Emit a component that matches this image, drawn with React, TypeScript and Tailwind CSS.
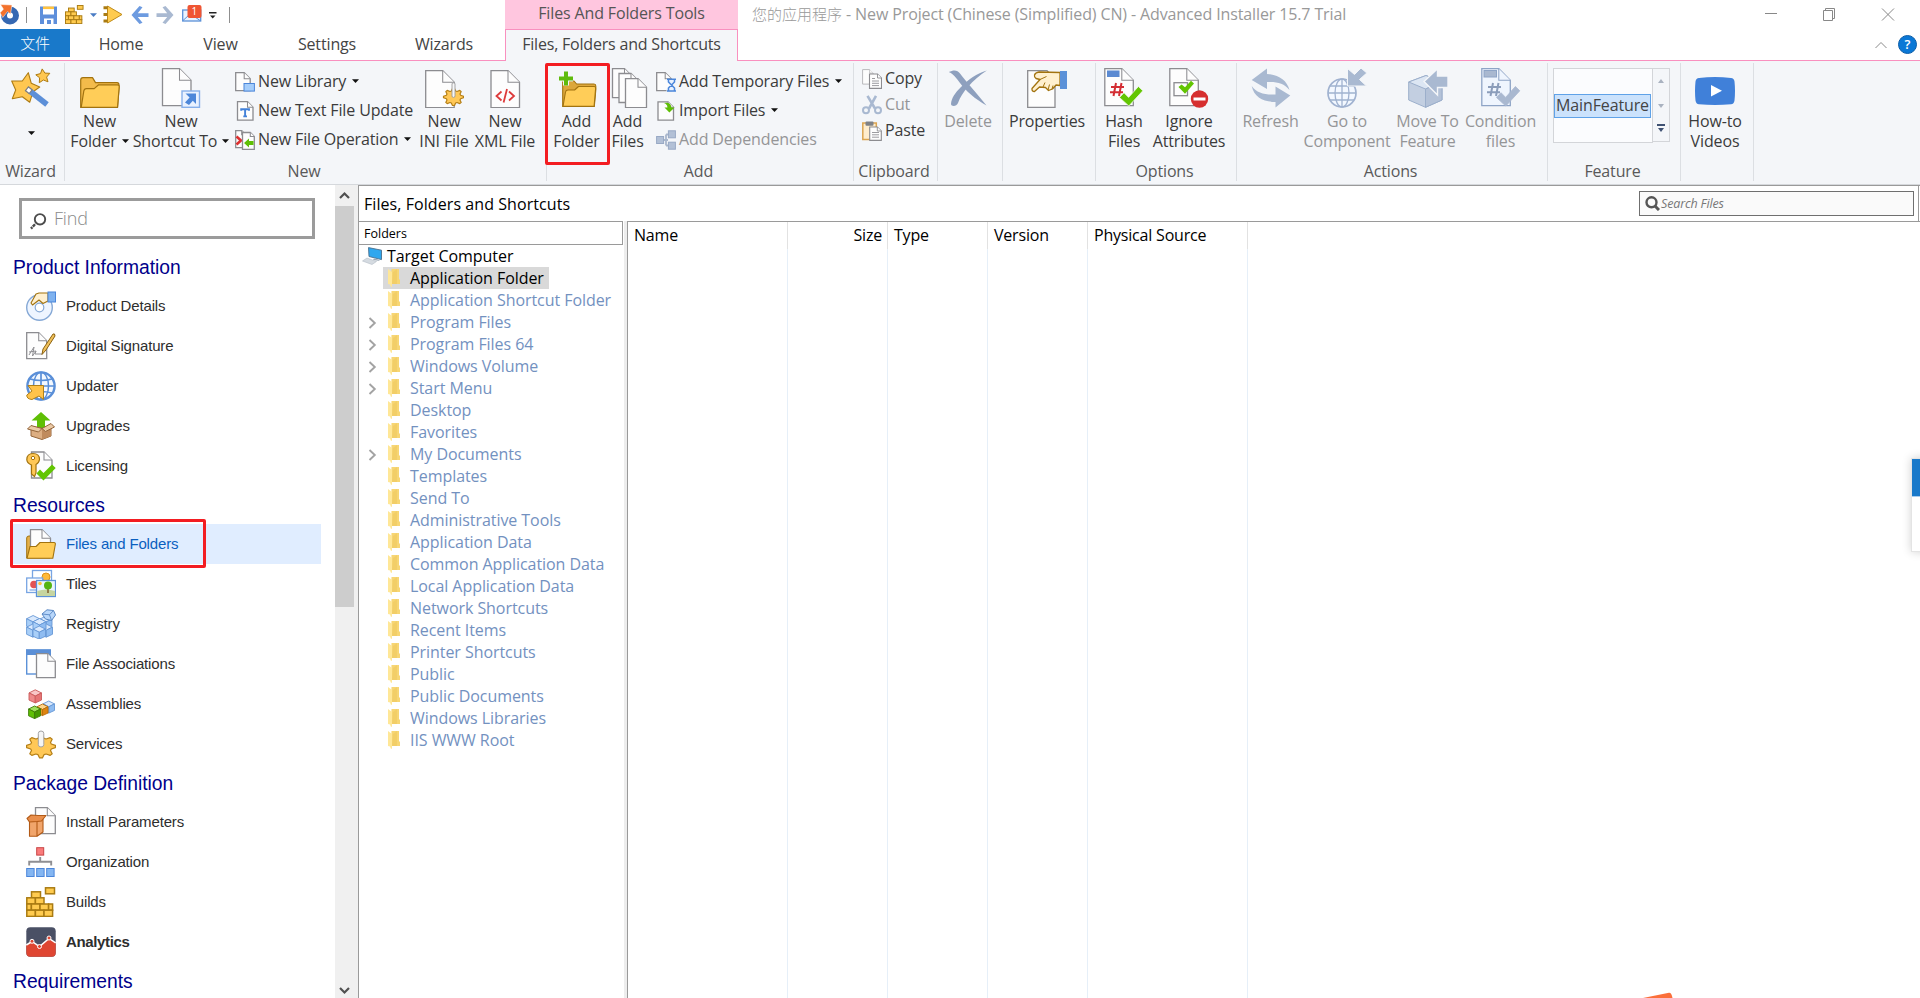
import type { ReactNode } from 'react';

/* ---------- drawing helpers ---------- */

function Svg({ w = 40, h = w, box, children }: { w?: number; h?: number; box?: string; children: ReactNode }) {
  return (
    <svg width={w} height={h} viewBox={box ?? `0 0 ${w} ${h}`} fill="none" className="shrink-0">
      {children}
    </svg>
  );
}

/* Sheet of paper with a folded corner */
function Page({ x, y, w, h, f, s = '#8c8c90', fill = '#fdfdfd', sw = 1.3 }: { x: number; y: number; w: number; h: number; f: number; s?: string; fill?: string; sw?: number }) {
  return (
    <g stroke={s} strokeWidth={sw} fill={fill}>
      <path d={`M${x} ${y}H${x + w - f}L${x + w} ${y + f}V${y + h}H${x}Z`} />
      <path d={`M${x + w - f} ${y}V${y + f}H${x + w}`} strokeWidth={sw * 0.8} />
    </g>
  );
}

function starPoints(cx: number, cy: number, r: number, turn: number) {
  return Array.from({ length: 10 }, (_, i) => {
    const a = ((turn + i * 36 - 90) * Math.PI) / 180;
    const q = i % 2 ? r * 0.5 : r;
    return `${(cx + q * Math.cos(a)).toFixed(1)},${(cy + q * Math.sin(a)).toFixed(1)}`;
  }).join(' ');
}

function Gear({ cx, cy, rx, ry }: { cx: number; cy: number; rx: number; ry: number }) {
  const pts = Array.from({ length: 32 }, (_, i) => {
    const a = ((i * 11.25 - 5.6) * Math.PI) / 180;
    const q = i % 4 < 2 ? 1 : 0.74;
    return `${(cx + q * rx * Math.cos(a)).toFixed(1)},${(cy + q * ry * Math.sin(a)).toFixed(1)}`;
  }).join(' ');
  return <polygon points={pts} fill="#ffc857" stroke="#b57f16" strokeWidth="1.2" strokeLinejoin="round" />;
}

function Cube({ x, y, s, top, left, right, line }: { x: number; y: number; s: number; top: string; left: string; right: string; line: string }) {
  const q = s / 4;
  return (
    <g stroke={line} strokeWidth="0.9" strokeLinejoin="round">
      <path d={`M${x} ${y + q}L${x + s / 2} ${y}L${x + s} ${y + q}L${x + s / 2} ${y + 2 * q}Z`} fill={top} />
      <path d={`M${x} ${y + q}L${x + s / 2} ${y + 2 * q}V${y + s * 1.05}L${x} ${y + s * 0.82}Z`} fill={left} />
      <path d={`M${x + s} ${y + q}L${x + s / 2} ${y + 2 * q}V${y + s * 1.05}L${x + s} ${y + s * 0.82}Z`} fill={right} />
    </g>
  );
}

const Caret = ({ className = 'text-[#111]' }: { className?: string }) => (
  <svg width="7" height="4" viewBox="0 0 7 4" className={`shrink-0 ${className}`}>
    <path d="M0 0.2H7L3.5 4Z" fill="currentColor" />
  </svg>
);

/* ---------- ribbon icons ---------- */

const WizardIcon = () => (
  <Svg>
    <polygon points="17.3,4.7 20.3,15.3 28.7,19 22,23.7 18.7,34.3 11.3,28.7 1.3,30.7 4.7,22 0.7,13 11.3,13" fill="#ffc751" stroke="#ad7b12" strokeWidth="1.1" strokeLinejoin="round" />
    <polygon points={starPoints(32, 8.3, 7.4, -6)} fill="#ffc751" stroke="#ad7b12" strokeWidth="1" strokeLinejoin="round" />
    <path d="M16 20.8L36 36.5" stroke="#5c8fd8" strokeWidth="5.6" />
    <path d="M15.5 20.4L20 24" stroke="#7d7d80" strokeWidth="6" />
    <path d="M16.4 21.1L19.2 23.3" stroke="#fff" strokeWidth="3.6" />
  </Svg>
);

const FolderIcon = () => (
  <Svg>
    <path d="M0.7 39.5V12Q0.7 9.6 3 9.6H12.5L15.5 14.6H37Q39 14.6 39 17V20L37.5 39.5Z" fill="#f3bb4b" stroke="#a2730f" strokeWidth="1.2" strokeLinejoin="round" />
    <path d="M1.2 39.4L3.8 23Q4.2 20.6 6.4 20.6H14.2L18.6 16.8H37.4Q39.4 16.8 39.2 19L37.5 39.4Z" fill="#ffcd58" stroke="#a2730f" strokeWidth="1.2" strokeLinejoin="round" />
  </Svg>
);

const ShortcutIcon = () => (
  <Svg>
    <Page x={1.5} y={0.7} w={28.5} h={37} f={11.5} />
    <rect x="21" y="23" width="17.5" height="16.3" fill="#e9f2ff" stroke="#86b0ea" strokeWidth="1.4" />
    <path d="M24.5 25.5H35V36L31.8 32.8L28 37L24 34.5L28.6 29.4Z" fill="#4c87d9" />
  </Svg>
);

const IniIcon = () => (
  <Svg>
    <Page x={1.7} y={2.7} w={28.5} h={37} f={11.5} />
    <Gear cx={29.5} cy={29} rx={10} ry={8.5} />
    <path d="M28 16Q28 14.8 29.5 14.8Q31 14.8 31 16V28Q31 29.4 29.5 29.4Q28 29.4 28 28Z" fill="#f7f7f7" stroke="#9a9a9c" strokeWidth="0.9" />
  </Svg>
);

const XmlIcon = () => (
  <Svg>
    <Page x={6} y={2.7} w={28.5} h={37} f={11.5} />
    <path d="M16.5 23.5L11.5 28L16.5 32.5M24 23.5L29 28L24 32.5M22 21L18.6 34.5" stroke="#dd3b3b" strokeWidth="1.8" />
  </Svg>
);

const AddFolderIcon = () => (
  <Svg>
    <path d="M5.7 38.5V13H17L19.6 16H37Q38.8 16 38.8 18V22L37.3 38.5Z" fill="#dca73c" stroke="#a2730f" strokeWidth="1.1" strokeLinejoin="round" />
    <path d="M6 38.4L8.5 24Q8.9 22 11 22H17.6L21.5 18.5H37Q38.8 18.5 38.6 20.6L37.1 38.4Z" fill="#ffcd58" stroke="#a2730f" strokeWidth="1.1" strokeLinejoin="round" />
    <path d="M9 3.6V17.6M2 10.6H16" stroke="#f4f6f9" strokeWidth="6" />
    <path d="M9 3.6V17.6M2 10.6H16" stroke="#5fbb0d" strokeWidth="4" />
  </Svg>
);

const AddFilesIcon = () => (
  <Svg>
    <Page x={4.5} y={0.7} w={20} h={29} f={8} />
    <Page x={11} y={5.5} w={20} h={29} f={8} />
    <Page x={17.5} y={10.7} w={21} h={29} f={8.5} />
  </Svg>
);

const DeleteIcon = () => (
  <Svg>
    <path d="M0.7 4C6 1.5 9.5 2 12 5.5C19 15 28 24 38.5 37.5C27 31 18 23 12 15C8 9.5 5.5 6 0.7 4Z" fill="#8ea0be" />
    <path d="M38.8 2.5C29 5 20 12 13 19C7 25 3.5 30 3 36C2.9 38.5 8.5 39 10 35C14 24 24 12.5 38.8 2.5Z" fill="#8ea0be" />
  </Svg>
);

const PropertiesIcon = () => (
  <Svg>
    <path d="M0.7 2.7H20L28 11V39.4H0.7Z" fill="#fdfdfd" stroke="#8c8c90" strokeWidth="1.3" />
    <path d="M7.5 7Q8.5 4.5 12 4L33 4.5V17.5L29 17L25.5 21L21.5 22.5L18.5 19.5L12.5 19L7.5 23.5Q4.6 23.5 5 20.5L13 11.5L9 10.5Q7 9 7.5 7Z" fill="#fff0cf" stroke="#a2730f" strokeWidth="1.3" strokeLinejoin="round" />
    <path d="M13 11.5L19.5 8.5M16 19L18 14.5M21 22L22.5 16.5M25 21L26 17.5" stroke="#a2730f" strokeWidth="1" />
    <rect x="33" y="3" width="7" height="18" fill="#5b91d8" />
  </Svg>
);

const HashIcon = ({ off = false }: { off?: boolean }) => (
  <Svg>
    <Page x={0.8} y={0.7} w={28.5} h={37} f={11.5} s={off ? '#8ea4c6' : '#8c8c90'} fill={off ? '#eff5fe' : '#fdfdfd'} />
    <rect x="3" y="2.5" width="12.5" height="6.5" fill={off ? '#a9b8d0' : '#5b8ad2'} stroke={off ? '#8ea4c6' : 'none'} />
    <path d="M12 15L9.5 28M17.5 15L15 28M7 19H20M6 24.3H19" stroke={off ? '#8b9dbb' : '#d32d33'} strokeWidth="2" />
    <path d="M15.5 29.5L20 24.7L24.6 29.4L34.4 18.5L38.8 22.8L24.8 38Z" fill={off ? '#a9b8d0' : '#62c502'} stroke={off ? '#a9b8d0' : '#eef8e6'} strokeWidth="0.8" />
  </Svg>
);

const IgnoreIcon = () => (
  <Svg>
    <Page x={0.8} y={0.7} w={28.5} h={37} f={11.5} />
    <rect x="5" y="14.7" width="13.5" height="13" stroke="#8c8c90" strokeWidth="1.3" />
    <path d="M9.5 19L12.6 16.5L16 19.3L22 12.8L25 15.6L16 25.8Z" fill="#62c502" />
    <circle cx="30.5" cy="31" r="8.7" fill="#d62f2f" />
    <path d="M24.5 31H36.5" stroke="#fff" strokeWidth="3" />
  </Svg>
);

const RefreshIcon = () => (
  <Svg>
    <path d="M0.7 12L16 0.5V6C27 6.5 36 12 38.5 22C33 15 26 13.5 16 14V21Z" fill="#a9b9d1" />
    <path d="M39.3 27.5L24.5 39.5V34C13 34 3 29.5 0.7 18C6 25 13 27 24.5 26.5V18.5Z" fill="#a9b9d1" />
  </Svg>
);

const ComponentIcon = () => (
  <Svg>
    <circle cx="15" cy="25" r="14" stroke="#a0b2d0" strokeWidth="1.7" fill="#f3f8ff" />
    <ellipse cx="15" cy="25" rx="7" ry="14" stroke="#a0b2d0" strokeWidth="1.3" />
    <path d="M15 11V39M1 25H29M3 18H27M3 32H27" stroke="#a0b2d0" strokeWidth="1.3" />
    <path d="M20.5 0.5L27.5 6.5L34 0L39.8 5L32.5 11.5L39.5 18H20.5Z" fill="#a9b9d1" stroke="#f4f6f9" strokeWidth="1" />
  </Svg>
);

const MoveIcon = () => (
  <Svg>
    <path d="M0.7 14L18 7.5L34 14V32L17.5 39.3L0.7 32Z" fill="#c3cfe1" stroke="#9cafcb" />
    <path d="M0.7 14L17.5 21L34 14L18 7.5Z" fill="#dce6f3" stroke="#9cafcb" />
    <path d="M17.5 21V39.3L34 32V14Z" fill="#b4c2d8" stroke="#9cafcb" />
    <path d="M16 13.5L29.5 0.7V8H40V19.5H29.5V27Z" fill="#a9b9d1" stroke="#f4f6f9" strokeWidth="1.4" />
  </Svg>
);

const VideoIcon = () => (
  <Svg>
    <path d="M4 10Q20 8 36 10Q39 10.3 39.5 13.5Q40.5 23 39.5 32.5Q39 36 36 36.2Q20 37.8 4 36.2Q1 36 0.5 32.5Q-0.5 23 0.5 13.5Q1 10.3 4 10Z" fill="#4080d9" />
    <path d="M16 17L27 22.8L16 28.6Z" fill="#fff" />
  </Svg>
);

const LibraryIcon = () => (
  <Svg w={20}>
    <Page x={0.7} y={0.7} w={14.5} h={18} f={6} />
    <rect x="9" y="11.5" width="10.4" height="7.6" fill="#a4cdfb" stroke="#4b86da" />
  </Svg>
);

const TextFileIcon = () => (
  <Svg w={20}>
    <Page x={2.5} y={0.7} w={15.5} h={18.4} f={5.5} />
    <path d="M6.2 9.7V8.3H14V9.7M10.1 8.3V15.4M8.3 15.4H12" stroke="#4381d8" strokeWidth="1.9" />
  </Svg>
);

const OperationIcon = () => (
  <Svg w={20}>
    <Page x={0.7} y={0.7} w={10} h={17} f={4} />
    <path d="M1.5 6.5L6 10.5L1.5 14.5" stroke="#dd3030" strokeWidth="2.6" />
    <Page x={7.5} y={2.5} w={11.8} h={17} f={4} />
    <path d="M9 13L14 8.5V11H18.5V15H14V17.5Z" fill="#5fbf05" />
  </Svg>
);

const TempIcon = () => (
  <Svg w={20}>
    <Page x={0.7} y={0.7} w={14.5} h={18} f={6} />
    <path d="M10.5 7H20V9L17 13L20 17V19.5H10.5V17L13.5 13L10.5 9Z" fill="#e9f2ff" />
    <path d="M11 7.3H20M11 19H20M12.5 8V10L18.5 16V18.5M18.5 8V10L12.5 16V18.5" stroke="#4b86da" strokeWidth="1.5" />
  </Svg>
);

const ImportIcon = () => (
  <Svg w={20}>
    <Page x={2} y={0.8} w={15.5} h={18.4} f={5.5} />
    <path d="M8 2Q15 0.5 15.3 6.5H18.6L13.4 11.5L8.5 6.5H11.6Q11.6 3.5 8 2Z" fill="#5fbf05" />
  </Svg>
);

const DependIcon = () => (
  <Svg w={20}>
    <path d="M7 10H12M10 4.5V15.5M10 4.5H13M10 15.5H13" stroke="#a9b7cd" strokeWidth="1.8" />
    <g fill="#b2c0d6" stroke="#98a9c5">
      <rect x="0.6" y="6.5" width="7" height="7" />
      <rect x="12.4" y="0.8" width="7" height="7" />
      <rect x="12.4" y="12.2" width="7" height="7" />
    </g>
  </Svg>
);

const CopyIcon = () => (
  <Svg w={20}>
    <Page x={0.6} y={0.6} w={10.5} h={14.5} f={3.5} s="#b9b9bc" sw={1} />
    <Page x={7.5} y={5} w={12} h={14.4} f={4} sw={1.1} />
    <path d="M10 9.5H13M10 12H17M10 14.3H17M10 16.6H17" stroke="#9c9ca0" />
  </Svg>
);

const CutIcon = () => (
  <Svg w={20}>
    <path d="M5.5 0.8L13 13.5M14 0.8L7 13.5" stroke="#a9b9d1" strokeWidth="2.6" />
    <circle cx="4" cy="15.3" r="3" stroke="#a9b9d1" strokeWidth="2" />
    <circle cx="16" cy="15.3" r="3" stroke="#a9b9d1" strokeWidth="2" />
  </Svg>
);

const PasteIcon = () => (
  <Svg w={20}>
    <rect x="0.8" y="2" width="13.5" height="16.5" fill="#ffedcd" stroke="#dba551" strokeWidth="1.5" />
    <rect x="3.5" y="0.6" width="8" height="4.2" rx="1" fill="#7f8287" />
    <Page x={7.7} y={6} w={11.6} h={13.4} f={4} sw={1.1} />
    <path d="M10 11.5H17M10 13.8H17M10 16.2H17" stroke="#9c9ca0" />
  </Svg>
);

/* ---------- quick access icons ---------- */

const AppLogo = () => (
  <Svg w={20} h={21}>
    <circle cx="10" cy="11.5" r="6" stroke="#3568b2" strokeWidth="6" />
    <path d="M0.5 0.5L12 1L10.5 10L7.5 7.6L2.8 13.5L0 8.8L3.5 5.2Z" fill="#f3722c" stroke="#fff" strokeWidth="0.5" />
  </Svg>
);

const SaveIcon = () => (
  <Svg w={17} h={18}>
    <path d="M0 0.5H17V18H13.5V12.5H4V18H0Z" fill="#5e8fdb" />
    <rect x="3" y="0.5" width="11" height="8" fill="#fff" />
    <rect x="3" y="0.5" width="11" height="2.6" fill="#ffc23e" />
    <rect x="7" y="14" width="4" height="4" fill="#5e8fdb" />
  </Svg>
);

const BricksIcon = ({ size }: { size: number }) => (
  <Svg w={size} box="0 0 30 30">
    <g fill="#ffcb4f" stroke="#a97b12" strokeWidth="1.5">
      <rect x="19.5" y="0.8" width="9" height="6" />
      <rect x="5.5" y="4.8" width="9" height="6" />
      <rect x="0.8" y="10.8" width="8.6" height="6.2" />
      <rect x="9.4" y="10.8" width="8.6" height="6.2" />
      <rect x="0.8" y="17" width="4.6" height="6.2" />
      <rect x="5.4" y="17" width="8.6" height="6.2" />
      <rect x="14" y="17" width="8.6" height="6.2" />
      <rect x="22.6" y="17" width="4" height="6.2" />
      <rect x="0.8" y="23.2" width="8.6" height="6.2" />
      <rect x="9.4" y="23.2" width="8.6" height="6.2" />
      <rect x="18" y="23.2" width="8.6" height="6.2" />
    </g>
  </Svg>
);

const RunIcon = () => (
  <Svg w={20} h={19}>
    <path d="M4.5 1L19 9.5L4.5 18Z" fill="#ffcb4f" stroke="#c08c1a" strokeLinejoin="round" />
    <path d="M0.5 2.8H4.5M0.5 9.5H4.5M0.5 16H4.5" stroke="#a97b12" strokeWidth="3" />
  </Svg>
);

const ArrowIcon = ({ color, flip = false }: { color: string; flip?: boolean }) => (
  <Svg w={18} h={20}>
    <path transform={flip ? 'matrix(-1 0 0 1 18 0)' : undefined} d="M0.5 10L8.5 1L11.5 2.2L6.8 8.2H17.5V12H6.8L11.5 17.8L8.5 19Z" fill={color} />
  </Svg>
);

const MailIcon = () => (
  <svg width="20" height="17" viewBox="0 0 20 17" className="shrink-0">
    <rect x="0.7" y="5" width="18" height="11" fill="#eaf3ff" stroke="#5b91d8" strokeWidth="1.3" />
    <path d="M1 15.5L7 10M18 15.5L13 12" stroke="#5b91d8" />
    <rect x="5.5" y="0" width="14" height="13" rx="2" fill="#ef5533" />
    <text x="12.4" y="10.2" textAnchor="middle" fontSize="10" fill="#fff" fontFamily="Open Sans">1</text>
  </svg>
);

/* ---------- sidebar icons ---------- */

const DetailsIcon = () => (
  <Svg w={30}>
    <circle cx="13.5" cy="16.5" r="12.8" fill="#eef5ff" stroke="#86a9d6" strokeWidth="1.4" />
    <circle cx="13.5" cy="16.5" r="4.3" fill="#fff" stroke="#86a9d6" strokeWidth="1.2" />
    <path d="M10 3L13 2H22V10L17 12.5L13 9L6.5 14L5 12Z" fill="#fff0cf" stroke="#a2730f" strokeWidth="1.1" strokeLinejoin="round" />
    <rect x="22" y="1" width="7.5" height="10" fill="#7fb2ef" stroke="#4b86da" />
  </Svg>
);

const SignatureIcon = () => (
  <Svg w={30}>
    <Page x={0.7} y={1.7} w={20} h={26} f={8} />
    <path d="M3 24L8 16L6.5 25L10 20L9 23H16M3 21L10 20" stroke="#909094" />
    <path d="M27 3Q29 2 29 5L20 19L16 23.5L17 18Z" fill="#f0c15b" stroke="#8b6110" strokeLinejoin="round" />
  </Svg>
);

const UpdaterIcon = () => (
  <Svg w={30}>
    <circle cx="15" cy="15" r="13.6" stroke="#5a8fd8" strokeWidth="2.4" fill="#f4f9ff" />
    <ellipse cx="15" cy="15" rx="7.5" ry="13.8" stroke="#5a8fd8" strokeWidth="1.5" />
    <path d="M15 1V29M1 15H29M4 8Q15 11 26 8M4 22Q15 19 26 22" stroke="#5a8fd8" strokeWidth="1.7" />
    <path d="M2 14.5H17.5V28.5L13 25L6 28.5Q0.5 28 0.8 24L6 20Z" fill="#ffc34a" stroke="#b08018" />
  </Svg>
);

const UpgradesIcon = () => (
  <Svg w={30}>
    <path d="M15 1L24.5 9.5H19V18H11V9.5H5.5Z" fill="#5fbf05" />
    <path d="M5 15L16 17.5L25 14.5V25L16 28.5L5 25Z" fill="#dcae82" stroke="#93653a" />
    <path d="M16 17.5V28.5L25 25V15Z" fill="#c08b5d" />
    <path d="M5 14.5L1.5 18L12.5 21L16 17.5ZM16 17.5L19.5 20.5L28.5 16L25 12.5Z" fill="#eac9a6" stroke="#93653a" strokeLinejoin="round" />
  </Svg>
);

const LicensingIcon = () => (
  <Svg w={30}>
    <Page x={5.5} y={1} w={20.5} h={26} f={8} />
    <path d="M7 2.5Q13.5 2.5 13.5 8.5Q13 12 10 13.5V22L8.5 25.5L5.5 23V14Q0.8 12 0.8 8.5Q1 2.5 7 2.5Z" fill="#ffc857" stroke="#a2730f" strokeWidth="1.2" />
    <circle cx="7" cy="7" r="1.7" fill="#fff" stroke="#a2730f" />
    <path d="M10.5 22.5L14 18.5L17.5 22L26 13.5L29.7 17L17.5 29.5Z" fill="#62c502" />
  </Svg>
);

const FilesFoldersIcon = () => (
  <Svg w={30}>
    <path d="M0.7 29V9Q0.7 7 3 7H10L12 10H24V29Z" fill="#e5b049" stroke="#a2730f" />
    <Page x={4.5} y={0.7} w={20} h={20} f={8.5} />
    <path d="M1 29.3L4 17.5H10L14 13.5H28Q29.6 13.5 29.3 15.5L26.8 29.3Z" fill="#ffcd58" stroke="#a2730f" strokeWidth="1.1" strokeLinejoin="round" />
  </Svg>
);

const TilesIcon = () => (
  <Svg w={30}>
    <rect x="6.5" y="1.5" width="19" height="12" fill="#fff" stroke="#78a5e3" strokeWidth="1.3" />
    <circle cx="20" cy="8" r="4" fill="#ffb938" stroke="#df9116" />
    <rect x="0.7" y="9" width="16" height="14.5" fill="#fff" stroke="#78a5e3" strokeWidth="1.3" />
    <circle cx="8" cy="15.5" r="3.8" fill="#e35353" />
    <path d="M3.5 21H10" stroke="#8fb4ea" strokeWidth="1.4" />
    <rect x="10.5" y="11.5" width="19" height="16" fill="#eaf6fd" stroke="#5b91d8" strokeWidth="1.3" />
    <path d="M11.3 22Q20 19 29 22V27H11.3Z" fill="#c6d5a0" />
    <path d="M22 18V24" stroke="#7a5423" strokeWidth="1.4" />
    <circle cx="22" cy="16.5" r="4" fill="#54b411" />
    <circle cx="14" cy="14.5" r="1.8" fill="#ffc23e" />
  </Svg>
);

const blue = { top: '#d9e9fd', left: '#a9cff8', right: '#8fbcf1', line: '#6797d6' };
const RegistryIcon = () => (
  <Svg w={30}>
    <Cube x={14} y={7} s={12} {...blue} />
    <Cube x={0.6} y={6.5} s={13} {...blue} />
    <Cube x={14} y={15} s={12.5} {...blue} />
    <Cube x={0.6} y={15} s={12.5} {...blue} />
    <Cube x={7} y={9.5} s={13} {...blue} />
    <Cube x={7} y={17} s={12.5} {...blue} />
    <path d="M16 5L21 0.8L27.5 1.5L29.5 6L25.5 11.5L19.5 10Z" fill="#b9d7fa" stroke="#5a88c4" strokeLinejoin="round" />
    <path d="M16 5L23.5 5.8L25.5 11.5M23.5 5.8L27.5 1.5" stroke="#5a88c4" strokeWidth="0.9" />
  </Svg>
);

const AssocIcon = () => (
  <Svg w={30}>
    <rect x="0.7" y="1" width="23.5" height="24" fill="#fff" stroke="#5b91d8" strokeWidth="1.4" />
    <rect x="0" y="0.5" width="25" height="5.5" fill="#5b8fd6" />
    <Page x={10.5} y={4.7} w={18.8} h={24} f={7.5} />
  </Svg>
);

const AssembliesIcon = () => (
  <Svg w={30}>
    <Cube x={3} y={0.8} s={12.5} top="#f9c7c7" left="#ee8a8a" right="#e57575" line="#c95a5a" />
    <Cube x={17} y={12} s={11.5} {...blue} />
    <Cube x={11} y={15} s={11} top="#ffd58a" left="#f5a32c" right="#dd8410" line="#b96d0c" />
    <Cube x={2.6} y={17} s={12} top="#9fe05b" left="#5fbf05" right="#459a02" line="#3c7d08" />
  </Svg>
);

const ServicesIcon = () => (
  <Svg w={30}>
    <Gear cx={15} cy={17.5} rx={14.5} ry={11.5} />
    <path d="M12.3 4.5Q12.3 2 15 2Q17.8 2 17.8 4.5V15.5Q17.8 18 15 18Q12.3 18 12.3 15.5Z" fill="#f5f5f5" stroke="#a3a3a5" />
  </Svg>
);

const InstallIcon = () => (
  <Svg w={30}>
    <Page x={9.5} y={0.7} w={19.8} h={26} f={8} />
    <path d="M3.5 14H11V29.3H3.5ZM11 14L17 12V25L11 29.3Z" fill="#f1a56b" stroke="#b25a16" strokeWidth="1.1" strokeLinejoin="round" />
    <path d="M3.5 15L1 11.5L5 8L12 8.5L20 8.5L15.5 14L11 14.5Z" fill="#e98f4c" stroke="#b25a16" strokeWidth="1.1" strokeLinejoin="round" />
  </Svg>
);

const OrganizationIcon = () => (
  <Svg w={30}>
    <rect x="10.7" y="0.7" width="7" height="7.4" fill="#fa7b7b" stroke="#c94545" />
    <path d="M14.2 10V14.5M3.2 18.5V14.8H25.2V18.5" stroke="#8f8f93" strokeWidth="1.9" />
    <g fill="#84b6f2" stroke="#4b86da">
      <rect x="0.7" y="21.5" width="7.4" height="8" />
      <rect x="10.7" y="21.5" width="7.4" height="8" />
      <rect x="20.7" y="21.5" width="7.4" height="8" />
    </g>
  </Svg>
);

const AnalyticsIcon = () => (
  <Svg w={30}>
    <rect x="0.3" y="0.3" width="29.4" height="29.4" rx="4" fill="#4a5065" />
    <path d="M0.3 18L6 14.5L13.5 19.5L23 11.5L29.7 16V25.7Q29.7 29.7 25.7 29.7H4.3Q0.3 29.7 0.3 25.7Z" fill="#df4632" />
    <path d="M0.3 18L6 14.5L13.5 19.5L23 11.5L29.7 16" stroke="#fff" strokeWidth="1.5" />
    <g fill="#df4632" stroke="#fff">
      <circle cx="6" cy="14.3" r="2" />
      <circle cx="13.5" cy="19.5" r="2" />
      <circle cx="23" cy="11" r="2" />
    </g>
  </Svg>
);

/* ---------- tree icons ---------- */

const TreeFolder = () => (
  <Svg w={13} h={18}>
    <path d="M3.5 0H11V10L12 11V15H3Z" fill="#f7d674" />
    <path d="M5 3L9 0V15H4Z" fill="#f0cb62" opacity="0.7" />
    <path d="M0 0L4 3V17.5L3 18L2 15.5L0 15Z" fill="#ffe797" />
  </Svg>
);

const ComputerIcon = () => (
  <Svg w={20} h={18}>
    <path d="M6.5 0.6L19.5 3.2V12.6L7 9.5Z" fill="#2ea7ee" stroke="#4a6f8d" strokeWidth="0.9" />
    <path d="M12 11.5L16 12.5L18 14L11 13Z" fill="#9aa8b5" />
    <path d="M0.5 14L5 11L14.5 14.5L10 17.5Z" fill="#d5dbe1" stroke="#b3bcc6" strokeWidth="0.6" />
  </Svg>
);

/* ---------- ribbon ---------- */

function Big({ icon, w, a, b, off, caret }: { icon: ReactNode; w: string; a: string; b?: string; off?: boolean; caret?: boolean }) {
  return (
    <div className={`flex shrink-0 flex-col items-center whitespace-nowrap pt-[7px] ${w} ${off ? 'text-[#949597]' : 'text-[#3b3b3b]'}`}>
      {icon}
      <span className="mt-[3px] h-5 leading-5">{a}</span>
      {b && (
        <span className="flex h-5 items-center gap-[5px] leading-5">
          {b}
          {caret && <Caret />}
        </span>
      )}
    </div>
  );
}

function Small({ icon, label, off, caret, h }: { icon: ReactNode; label: string; off?: boolean; caret?: boolean; h: string }) {
  return (
    <div className={`flex items-center whitespace-nowrap ${h} ${off ? 'text-[#949597]' : 'text-[#3b3b3b]'}`}>
      {icon}
      <span className="-mt-[2px] ml-[3px]">{label}</span>
      {caret && (
        <span className="-mt-[2px] ml-[6px] flex">
          <Caret />
        </span>
      )}
    </div>
  );
}

function Group({ w, label = '', children }: { w: string; label?: string; children: ReactNode }) {
  return (
    <>
      <div className={`flex h-[123px] shrink-0 flex-col ${w}`}>
        <div className="flex h-[100px] justify-start">{children}</div>
        <div className="h-5 pr-[3px] text-center leading-5 text-[#595959]">{label}</div>
      </div>
      <div className="mt-[2px] h-[118px] w-px shrink-0 bg-[#dcdfe3]" />
    </>
  );
}

function Ribbon() {
  return (
    <div className="flex h-[124px] shrink-0 border-b border-[#d5d8dc] bg-[#f4f6f9] text-[16px] tracking-[-0.14px]">
      <Group w="w-[64px]" label="Wizard">
        <div className="flex w-[62px] flex-col items-center pt-[7px]">
          <WizardIcon />
          <span className="mt-[23px]">
            <Caret />
          </span>
        </div>
      </Group>

      <Group w="w-[481px]" label="New">
        <Big w="w-[69px]" icon={<FolderIcon />} a="New" b="Folder" caret />
        <Big w="w-[94px]" icon={<ShortcutIcon />} a="New" b="Shortcut To" caret />
        <div className="ml-[7px] w-[180px] shrink-0 pt-[6px]">
          <Small h="h-[29px]" icon={<LibraryIcon />} label="New Library" caret />
          <Small h="h-[29px]" icon={<TextFileIcon />} label="New Text File Update" />
          <Small h="h-[29px]" icon={<OperationIcon />} label="New File Operation" caret />
        </div>
        <Big w="w-[58px]" icon={<IniIcon />} a="New" b="INI File" />
        <Big w="w-[64px]" icon={<XmlIcon />} a="New" b="XML File" />
      </Group>

      <Group w="w-[306px]" label="Add">
        <div className="relative flex shrink-0">
          <Big w="w-[59px]" icon={<AddFolderIcon />} a="Add" b="Folder" />
          <div className="absolute -left-[2px] top-[2px] h-[102px] w-[65px] rounded-[2px] border-3 border-[#f31d22]" />
        </div>
        <Big w="w-[43px]" icon={<AddFilesIcon />} a="Add" b="Files" />
        <div className="ml-[7px] shrink-0 pt-[6px]">
          <Small h="h-[29px]" icon={<TempIcon />} label="Add Temporary Files" caret />
          <Small h="h-[29px]" icon={<ImportIcon />} label="Import Files" caret />
          <Small h="h-[29px]" icon={<DependIcon />} label="Add Dependencies" off />
        </div>
      </Group>

      <Group w="w-[83px]" label="Clipboard">
        <div className="ml-[8px] pt-[5px]">
          <Small h="h-[26px]" icon={<CopyIcon />} label="Copy" />
          <Small h="h-[26px]" icon={<CutIcon />} label="Cut" off />
          <Small h="h-[26px]" icon={<PasteIcon />} label="Paste" />
        </div>
      </Group>

      <Group w="w-[64px]">
        <Big w="w-[60px]" icon={<DeleteIcon />} a="Delete" off />
      </Group>

      <Group w="w-[92px]">
        <Big w="w-[88px]" icon={<PropertiesIcon />} a="Properties" />
      </Group>

      <Group w="w-[140px]" label="Options">
        <Big w="w-[56px]" icon={<HashIcon />} a="Hash" b="Files" />
        <Big w="w-[74px]" icon={<IgnoreIcon />} a="Ignore" b="Attributes" />
      </Group>

      <Group w="w-[310px]" label="Actions">
        <Big w="w-[67px]" icon={<RefreshIcon />} a="Refresh" off />
        <Big w="w-[86px]" icon={<ComponentIcon />} a="Go to" b="Component" off />
        <Big w="w-[75px]" icon={<MoveIcon />} a="Move To" b="Feature" off />
        <Big w="w-[71px]" icon={<HashIcon off />} a="Condition" b="files" off />
      </Group>

      <Group w="w-[132px]" label="Feature">
        <div className="ml-[5px] mt-[7px] flex h-[75px] w-[118px]">
          <div className="flex w-[100px] items-center border border-[#d3d5d9] bg-[#fbfcfe]">
            <div className="flex h-6 w-[97px] items-center justify-center border border-[#5fa2e8] bg-[#cbe2fc] pb-[2px] text-[#444]">MainFeature</div>
          </div>
          <div className="-ml-px flex h-[74px] w-[18px] flex-col items-center border border-[#d3d5d9]">
            <svg width="8" height="60" viewBox="0 0 8 60" className="mt-[8px]">
              <path d="M1 6H7L4 2Z M1 27H7L4 31Z" fill="#a9b2c0" />
              <path d="M0 47H8V49H0Z M1 51H7L4 55Z" fill="#3f5273" />
            </svg>
          </div>
        </div>
      </Group>

      <Group w="w-[72px]">
        <Big w="w-[68px]" icon={<VideoIcon />} a="How-to" b="Videos" />
      </Group>
    </div>
  );
}

/* ---------- header ---------- */

function Header() {
  return (
    <div className="shrink-0 text-[16px]">
      <div className="flex h-[29px]">
        <div className="flex h-[29px] w-[505px] shrink-0 items-center">
          <AppLogo />
          <div className="ml-[6px] h-4 w-px bg-[#8f8f8f]" />
          <span className="ml-[13px] flex"><SaveIcon /></span>
          <span className="ml-[8px] flex"><BricksIcon size={19} /></span>
          <span className="ml-[6px] flex"><Caret className="text-[#4a7cc4]" /></span>
          <span className="ml-[6px] flex"><RunIcon /></span>
          <span className="ml-[8px] flex"><ArrowIcon color="#6d9be0" /></span>
          <span className="ml-[7px] flex"><ArrowIcon color="#a9b9d1" flip /></span>
          <span className="-mt-[3px] ml-[8px] flex"><MailIcon /></span>
          <svg width="8" height="8" viewBox="0 0 8 8" className="ml-[7px] mt-[2px]">
            <path d="M0 0H7.5V1.4H0Z M1 3.5H6.5L3.7 6.6Z" fill="#222" />
          </svg>
          <div className="ml-[12px] h-4 w-px bg-[#8f8f8f]" />
        </div>
        <div className="w-[233px] shrink-0 bg-[#ffc6df] text-center leading-[26px] tracking-[-0.14px] text-[#555]">Files And Folders Tools</div>
        <div className="ml-[14px] flex-1 whitespace-nowrap leading-[27px] text-[#999]">
          <span className="font-['Noto_Sans_CJK_SC',sans-serif] text-[15px] font-light">您的应用程序</span>
          <span className="tracking-[-0.12px]"> - New Project (Chinese (Simplified) CN) - Advanced Installer 15.7 Trial</span>
        </div>
        <svg width="156" height="29" viewBox="0 0 156 29" fill="none" stroke="#888" className="shrink-0">
          <path d="M1 13.5H13" />
          <path d="M59.5 10.5H68.5V20.5H59.5Z M61.5 10V8.5H70.5V18.5H69" />
          <path d="M118 8.5L130 20.5M130 8.5L118 20.5" />
        </svg>
      </div>
      <div className="flex h-8 text-[#444]">
        <div className="flex w-[505px] shrink-0 border-b border-[#f990bf] text-center leading-[31px] tracking-[-0.14px]">
          <div className="h-7 w-[70px] bg-[#1979ca] font-['Noto_Sans_CJK_SC',sans-serif] text-[15px] font-light leading-[28px] text-white">文件</div>
          <div className="w-[102px]">Home</div>
          <div className="w-[97px]">View</div>
          <div className="w-[116px]">Settings</div>
          <div className="w-[118px]">Wizards</div>
        </div>
        <div className="w-[233px] shrink-0 border-x border-t border-[#f990bf] bg-[#f4f6f9] text-center leading-[29px] tracking-[-0.2px]">Files, Folders and Shortcuts</div>
        <div className="flex flex-1 items-center justify-end border-b border-[#f990bf] pr-[3px]">
          <svg width="12" height="8" viewBox="0 0 12 8" fill="none" stroke="#8a8a8a" className="mr-[11px]">
            <path d="M0.5 7L6 1.5L11.5 7" />
          </svg>
          <div className="h-[19px] w-[19px] rounded-full border border-[#0b5da8] bg-[#0a78d6] text-center text-[13px] font-semibold leading-[17px] text-white">?</div>
        </div>
      </div>
    </div>
  );
}

/* ---------- sidebar ---------- */

type Item = { label: string; icon: ReactNode; on?: boolean; bold?: boolean };

const sections: { title: string; items: Item[] }[] = [
  {
    title: 'Product Information',
    items: [
      { label: 'Product Details', icon: <DetailsIcon /> },
      { label: 'Digital Signature', icon: <SignatureIcon /> },
      { label: 'Updater', icon: <UpdaterIcon /> },
      { label: 'Upgrades', icon: <UpgradesIcon /> },
      { label: 'Licensing', icon: <LicensingIcon /> },
    ],
  },
  {
    title: 'Resources',
    items: [
      { label: 'Files and Folders', icon: <FilesFoldersIcon />, on: true },
      { label: 'Tiles', icon: <TilesIcon /> },
      { label: 'Registry', icon: <RegistryIcon /> },
      { label: 'File Associations', icon: <AssocIcon /> },
      { label: 'Assemblies', icon: <AssembliesIcon /> },
      { label: 'Services', icon: <ServicesIcon /> },
    ],
  },
  {
    title: 'Package Definition',
    items: [
      { label: 'Install Parameters', icon: <InstallIcon /> },
      { label: 'Organization', icon: <OrganizationIcon /> },
      { label: 'Builds', icon: <BricksIcon size={30} /> },
      { label: 'Analytics', icon: <AnalyticsIcon />, bold: true },
    ],
  },
  { title: 'Requirements', items: [] },
];

function Sidebar() {
  return (
    <div className="flex w-[358px] shrink-0 overflow-hidden">
      <div className="w-[335px] shrink-0 bg-white pt-[13px] font-['Liberation_Sans',sans-serif]">
        <div className="ml-[19px] flex h-[41px] w-[296px] items-center border-3 border-[#9b9b9b] pl-[8px]">
          <svg width="17" height="17" viewBox="0 0 17 17" fill="none" stroke="#4c4c4c" className="mt-[5px]">
            <circle cx="10" cy="6.3" r="5.2" strokeWidth="1.9" />
            <path d="M5 11.2L1 15.6" strokeWidth="2.4" strokeDasharray="3.2 0.8 3" />
          </svg>
          <span className="ml-[7px] font-['Open_Sans',sans-serif] text-[18px] font-light tracking-[-0.2px] text-[#8a8a8a]">Find</span>
        </div>
        <div className="h-[9px]" />
        {sections.map((s) => (
          <div key={s.title}>
            <div className="h-[38px] pl-[13px] text-[19.3px] leading-[39px] tracking-[-0.03px] text-[#00008b]">{s.title}</div>
            {s.items.map((i) => (
              <div key={i.label} className={`relative ml-[13px] flex h-10 w-[308px] items-center pl-[13px] ${i.on ? 'bg-[#e0edff]' : ''}`}>
                {i.icon}
                <span className={`ml-[10px] text-[15px] tracking-[-0.16px] ${i.on ? 'text-[#0a5fc0]' : 'text-[#2e2e2e]'} ${i.bold ? 'font-bold tracking-[-0.35px]' : ''}`}>{i.label}</span>
                {i.on && <div className="absolute -left-[3px] -top-[5px] h-[49px] w-[196px] rounded-[2px] border-3 border-[#f31d22]" />}
              </div>
            ))}
          </div>
        ))}
      </div>
      <div className="flex w-[23px] shrink-0 flex-col bg-[#f0f0f0]">
        <svg width="19" height="21" viewBox="0 0 19 21" fill="none" stroke="#505050" strokeWidth="2.2">
          <path d="M5 13L9.5 8.5L14 13" />
        </svg>
        <div className="h-[401px] w-[19px] bg-[#cdcdcd]" />
        <div className="flex-1" />
        <svg width="19" height="18" viewBox="0 0 19 18" fill="none" stroke="#505050" strokeWidth="2.2">
          <path d="M5 8L9.5 12.5L14 8" />
        </svg>
      </div>
    </div>
  );
}

/* ---------- folder tree ---------- */

const folders = [
  'Application Folder', 'Application Shortcut Folder', '>Program Files', '>Program Files 64', '>Windows Volume', '>Start Menu',
  'Desktop', 'Favorites', '>My Documents', 'Templates', 'Send To', 'Administrative Tools', 'Application Data',
  'Common Application Data', 'Local Application Data', 'Network Shortcuts', 'Recent Items', 'Printer Shortcuts', 'Public',
  'Public Documents', 'Windows Libraries', 'IIS WWW Root',
];

function Tree() {
  return (
    <div className="flex w-[264px] shrink-0 flex-col text-[16px] text-black">
      <div className="flex h-6 items-center border-y border-r border-[#9a9a9a] pl-[5px] pt-[2px] text-[12.5px]">Folders</div>
      <div className="flex h-[22px] items-center pl-[3px]">
        <ComputerIcon />
        <span className="ml-[5px] tracking-[-0.05px]">Target Computer</span>
      </div>
      {folders.map((f, n) => {
        const parent = f.startsWith('>');
        return (
          <div key={f} className="flex h-[22px] items-center">
            <div className="flex w-6 shrink-0 justify-center pl-[2px]">
              {parent && (
                <svg width="9" height="12" viewBox="0 0 9 12" fill="none" stroke="#a3a3a3" strokeWidth="1.9" className="mt-px">
                  <path d="M1.5 1L6.8 6L1.5 11" />
                </svg>
              )}
            </div>
            <div className={`flex h-[22px] items-center whitespace-nowrap pl-[5px] pr-[5px] ${n === 0 ? 'bg-[#d9d9d9] text-black' : 'text-[#7391bf]'}`}>
              <TreeFolder />
              <span className="ml-[9px] tracking-[-0.06px]">{f.replace('>', '')}</span>
            </div>
          </div>
        );
      })}
    </div>
  );
}

/* ---------- file list ---------- */

function FileTable() {
  const cell = 'flex h-full shrink-0 flex-col border-r border-[#e6eff8]';
  const head = 'h-[27px] leading-[27px] -mr-px border-r border-[#e2e2e2]';
  return (
    <div className="flex flex-1 border-l border-t border-[#9a9a9a] text-[16px] tracking-[-0.2px] text-black">
      <div className={`${cell} w-[160px]`}><div className={`${head} pl-[6px]`}>Name</div></div>
      <div className={`${cell} w-[100px]`}><div className={`${head} pr-[5px] text-right`}>Size</div></div>
      <div className={`${cell} w-[100px]`}><div className={`${head} pl-[6px]`}>Type</div></div>
      <div className={`${cell} w-[100px]`}><div className={`${head} pl-[6px]`}>Version</div></div>
      <div className={`${cell} w-[160px]`}><div className={`${head} pl-[6px]`}>Physical Source</div></div>
    </div>
  );
}

export default function App() {
  return (
    <div className="relative flex h-[998px] w-[1920px] flex-col overflow-hidden bg-white font-['Open_Sans','Noto_Sans_CJK_SC',sans-serif]">
      <Header />
      <Ribbon />
      <div className="flex min-h-0 flex-1">
        <Sidebar />
        <div className="flex flex-1 flex-col border-l border-t border-[#9a9a9a]">
          <div className="mr-px flex h-[35px] shrink-0 items-center justify-between border-r border-[#9a9a9a] pl-[5px] pr-[4px] text-[16px] text-black">
            <span className="tracking-[0.07px]">Files, Folders and Shortcuts</span>
            <div className="flex h-[25px] w-[275px] items-center border border-[#6f6f6f] bg-[#fafafa] pl-[5px]">
              <svg width="15" height="15" viewBox="0 0 15 15" fill="none" stroke="#555">
                <circle cx="6.5" cy="6.3" r="5" strokeWidth="2.4" />
                <path d="M10 10L14 14" strokeWidth="3" />
              </svg>
              <span className="ml-px mt-px text-[12.5px] italic tracking-[-0.15px] text-[#777]">Search Files</span>
            </div>
          </div>
          <div className="flex min-h-0 flex-1">
            <Tree />
            <div className="flex w-[4px] shrink-0 justify-end">
              <div className="w-[3px] bg-[#ededed]" />
            </div>
            <FileTable />
          </div>
        </div>
      </div>

      {/* docked panel peeking in from the right edge */}
      <div className="absolute left-[1911px] top-[458px] h-[94px] w-5 border border-[#e4e4e4] bg-white shadow-[0_0_10px_rgba(0,0,0,0.18)]">
        <div className="h-[38px] border-b border-[#a9cdee] bg-[#1979ca]" />
      </div>
      <svg width="32" height="6" viewBox="0 0 32 6" className="absolute left-[1642px] top-[992px]">
        <path d="M1 6L27 0.8Q29.5 0.5 30.5 6Z" fill="#fb6f3a" />
      </svg>
    </div>
  );
}
